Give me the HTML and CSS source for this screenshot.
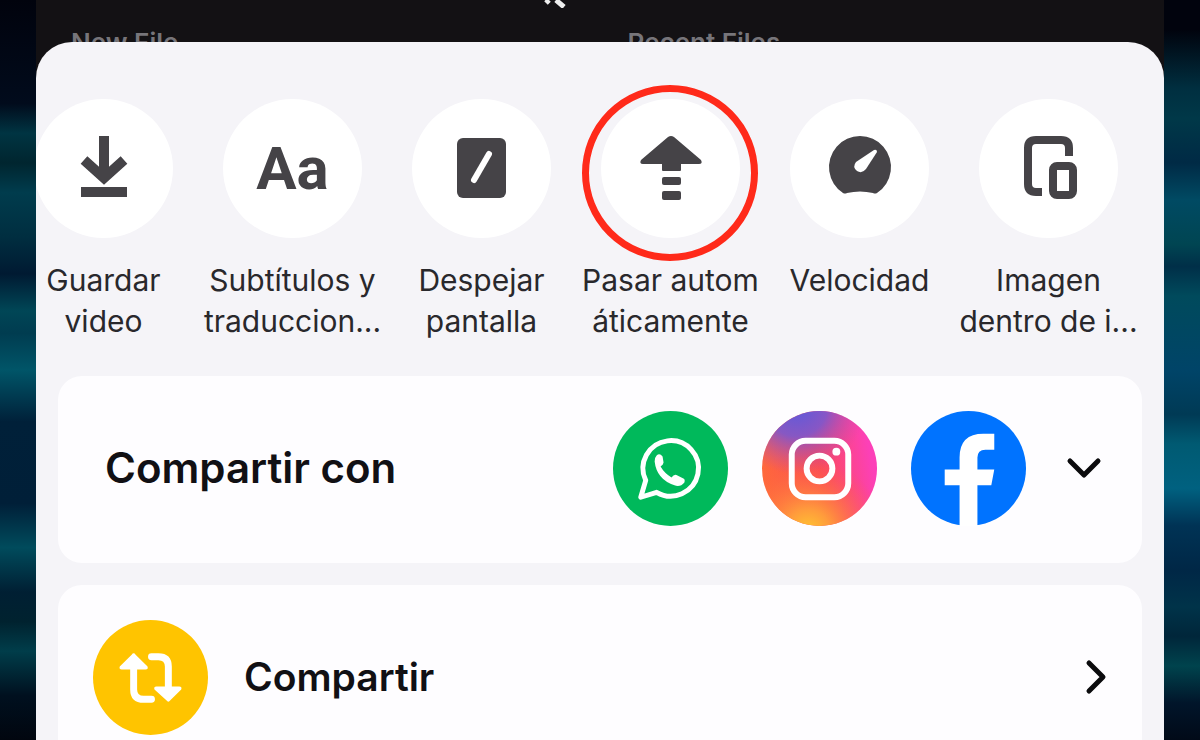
FILE: index.html
```
<!DOCTYPE html>
<html lang="es">
<head>
  <meta charset="UTF-8">
  <meta name="viewport" content="width=device-width, initial-scale=1.0">
  <title>Compartir</title>
  <link rel="stylesheet" href="styles.css">
</head>
<body>
  <div class="phone">
    <header class="editor">
      <svg class="cursor" viewBox="0 0 24 8"><path d="M5 0l-3 3M12 0l8 7" /></svg>
      <span>New File</span>
      <span>Recent Files</span>
    </header>

    <main class="sheet">
      <div class="actions">
        <button class="action">
          <span class="circle">
            <svg viewBox="0 0 139 139"><path class="line" d="M70 37v42M50 61l20 18 20-18" /><path d="M47 88h46v10H47z" /></svg>
          </span>
          <span class="label">Guardar<br>video</span>
        </button>
        <button class="action">
          <span class="circle"><span class="letters">Aa</span></span>
          <span class="label">Subtítulos y<br>traduccion...</span>
        </button>
        <button class="action">
          <span class="circle">
            <svg viewBox="0 0 139 139"><rect x="45" y="39" width="49" height="60" rx="6" /><path class="slash" d="M62 81l15-26" /></svg>
          </span>
          <span class="label">Despejar<br>pantalla</span>
        </button>
        <button class="action">
          <span class="circle marked">
            <svg viewBox="0 0 139 139">
              <path d="M67 38q3-2 6 0l27 23q2 4-2 4H80v6q0 1-1 1H62q-1 0-1-1v-6H42q-4 0-2-4z" />
              <rect x="61" y="78" width="19" height="8" rx="2" /><rect x="61" y="92" width="19" height="9" rx="2" />
            </svg>
          </span>
          <span class="label">Pasar autom<br>áticamente</span>
        </button>
        <button class="action">
          <span class="circle">
            <svg viewBox="0 0 139 139"><path d="M53 94A31 31 0 1 1 87 94q-2 1-4 0-13-3-26 0-2 1-4 0z" /><path class="needle" d="M84 51q3-1 3 2L76 70q-4 5-9 2-5-4-1-9z" /></svg>
          </span>
          <span class="label">Velocidad</span>
        </button>
        <button class="action">
          <span class="circle">
            <svg viewBox="0 0 139 139"><path class="line pip" d="M90 57v-8q0-8-8-8H57q-8 0-8 8v36q0 8 8 8h6" /><rect class="line pip" x="74" y="67" width="20" height="29" rx="4" /></svg>
          </span>
          <span class="label">Imagen<br>dentro de i...</span>
        </button>
      </div>

      <section class="card share-with">
        <h2>Compartir con</h2>
        <div class="apps">
          <button class="app" aria-label="WhatsApp">
            <svg viewBox="0 0 116 116">
              <circle cx="58" cy="58" r="58" fill="#00b95b" />
              <path d="M28 87l5-17a28 28 0 1 1 11 12z" fill="none" stroke="#fff" stroke-width="5" stroke-linejoin="round" />
              <path d="M44 45q3-3 6 1l1 6q0 2-3 4 4 7 11 11 3-4 6-2l6 3q2 1 1 4-4 5-10 3Q44 69 42 51q0-4 2-6z" fill="#fff" />
            </svg>
          </button>
          <button class="app" aria-label="Instagram">
            <svg viewBox="0 0 116 116">
              <defs>
                <linearGradient id="ig-base" x1="0" y1="0.6" x2="1" y2="0.4">
                  <stop offset="0" stop-color="#ff6a3a" /><stop offset="0.5" stop-color="#fb4a58" /><stop offset="0.95" stop-color="#fc40b8" />
                </linearGradient>
                <radialGradient id="ig-blue" cx="0.3" cy="-0.05" r="0.6">
                  <stop offset="0" stop-color="#5a5ade" /><stop offset="0.45" stop-color="#7a58d0" stop-opacity="0.9" /><stop offset="1" stop-color="#c14ab0" stop-opacity="0" />
                </radialGradient>
                <radialGradient id="ig-yellow" cx="0.4" cy="1.05" r="0.65">
                  <stop offset="0" stop-color="#ffc830" /><stop offset="0.3" stop-color="#ff9b3c" /><stop offset="1" stop-color="#ff5a40" stop-opacity="0" />
                </radialGradient>
              </defs>
              <circle cx="58" cy="58" r="58" fill="url(#ig-base)" />
              <circle cx="58" cy="58" r="58" fill="url(#ig-yellow)" />
              <circle cx="58" cy="58" r="58" fill="url(#ig-blue)" />
              <g fill="none" stroke="#fff" stroke-width="6">
                <rect x="30" y="30" width="57" height="57" rx="14" />
                <circle cx="58" cy="58" r="13" />
              </g>
              <circle cx="75" cy="41" r="4" fill="#fff" />
            </svg>
          </button>
          <button class="app" aria-label="Facebook">
            <svg viewBox="0 0 116 116">
              <circle cx="58" cy="58" r="58" fill="#0073ff" />
              <path d="M49 116V75H34V59h15V47q0-24 24-24h11v16H75q-8 0-8 8v12h17l-3 16H67v41z" fill="#fff" />
            </svg>
          </button>
        </div>
        <button class="more" aria-label="Mostrar más"><svg viewBox="0 0 36 36"><path d="M4 11l14 14 14-14" /></svg></button>
      </section>

      <a class="card repost" href="#">
        <svg class="repost-icon" viewBox="0 0 116 116">
          <circle cx="58" cy="58" r="58" fill="#ffc400" />
          <g fill="none" stroke="#fff" stroke-width="7" stroke-linecap="round">
            <path d="M41 46v24q0 10 10 10h8" /><path d="M59 37h7q10 0 10 10v24" />
          </g>
          <path d="M39 35q2-3 4 0l12 12q1 3-2 3H29q-3 0-2-3zM74 81q2 3 4 0l11-11q1-3-2-3H64q-3 0-2 3z" fill="#fff" />
        </svg>
        <h2>Compartir</h2>
        <span class="more"><svg viewBox="0 0 36 36"><path d="M11 4l14 14-14 14" /></svg></span>
      </a>
    </main>
  </div>
</body>
</html>
```

FILE: styles.css
```
* { box-sizing: border-box; }
body {
  margin: 0;
  height: 100vh;
  overflow: hidden;
  font-family: Inter, "Liberation Sans", sans-serif;
  color: #111014;
  background:
    linear-gradient(#01030d 0%, #010b1c 14%, #003442 18%, #00252f 22%, #003c4d 26%, #002e40 32%, #001a32 37%, #004656 42%, #003c50 45%, #005568 50%, #002039 57%, #001f38 68%, #004b5c 74%, #001f33 80%, #00222f 84%, #003d4a 88%, #00101f 94%, #01060f 100%) left / 50% 100% no-repeat,
    linear-gradient(#01030d 4%, #002f40 12%, #003848 16%, #002a45 22%, #004a63 27%, #004552 33%, #002f48 36%, #004a5c 40%, #004468 50%, #003a55 56%, #005a72 60%, #006180 66%, #003355 71%, #002746 77%, #003349 82%, #00263a 86%, #00434d 90%, #01152a 95%, #010a18 100%) right / 50% 100% no-repeat;
}
button { padding: 0; border: 0; background: none; color: inherit; font: inherit; cursor: pointer; }
svg { display: block; }
h2 { margin: 0; font-size: 42px; line-height: 50px; font-weight: 600; }

.phone { margin: 0 36px; background: #131114; }
.editor {
  position: relative;
  display: grid;
  grid-template-columns: 1fr 1fr;
  gap: 20px;
  height: 42px;
  padding: 28px 0 0 35px;
  overflow: hidden;
  font-size: 26px;
  line-height: 30px;
  font-weight: 600;
  color: #77757a;
}
.cursor { position: absolute; top: 0; left: 45%; width: 24px; height: 8px; fill: none; stroke: #eee; stroke-width: 5; }

.sheet { padding: 57px 22px 0; border-radius: 36px 36px 0 0; background: #f5f4f8; overflow: hidden; }
.actions { display: grid; grid-template-columns: repeat(6, 1fr); margin: 0 -1px 34px -49px; }
.action { display: flex; flex-direction: column; align-items: center; }
.circle {
  position: relative;
  display: flex;
  align-items: center;
  justify-content: center;
  width: 139px;
  height: 139px;
  border-radius: 50%;
  background: #fff;
}
.circle svg { width: 139px; height: 139px; fill: #454347; }
.circle .line { fill: none; stroke: #454347; stroke-width: 10; }
.circle .pip { stroke-width: 8; }
.circle .slash { stroke: #fff; stroke-width: 6; stroke-linecap: round; }
.circle .needle { fill: #fff; }
.letters { font-family: Roboto, sans-serif; font-size: 60px; line-height: 60px; font-weight: 700; color: #454347; }
.marked::after {
  content: "";
  position: absolute;
  top: -14px;
  left: -19px;
  width: 162px;
  height: 162px;
  border: 7px solid #ff2a1a;
  border-radius: 50%;
}
.label { margin-top: 22px; font-size: 30px; line-height: 41px; white-space: nowrap; color: #29282c; }

.card { display: flex; align-items: center; height: 187px; margin-bottom: 22px; padding-bottom: 3px; border-radius: 24px; background: #fefdff; color: inherit; text-decoration: none; }
.share-with { padding-left: 47px; padding-right: 40px; }
.apps { display: flex; gap: 34px; margin: 0 40px 0 auto; }
.app svg, .repost-icon { width: 115px; height: 115px; }
.more svg { width: 36px; height: 36px; fill: none; stroke: #0b0b0d; stroke-width: 5; stroke-linecap: round; stroke-linejoin: round; }
.repost { gap: 36px; margin-bottom: 0; padding-left: 35px; padding-right: 28px; }
.repost h2 { font-size: 39px; }
.repost .more { margin-left: auto; }
```
